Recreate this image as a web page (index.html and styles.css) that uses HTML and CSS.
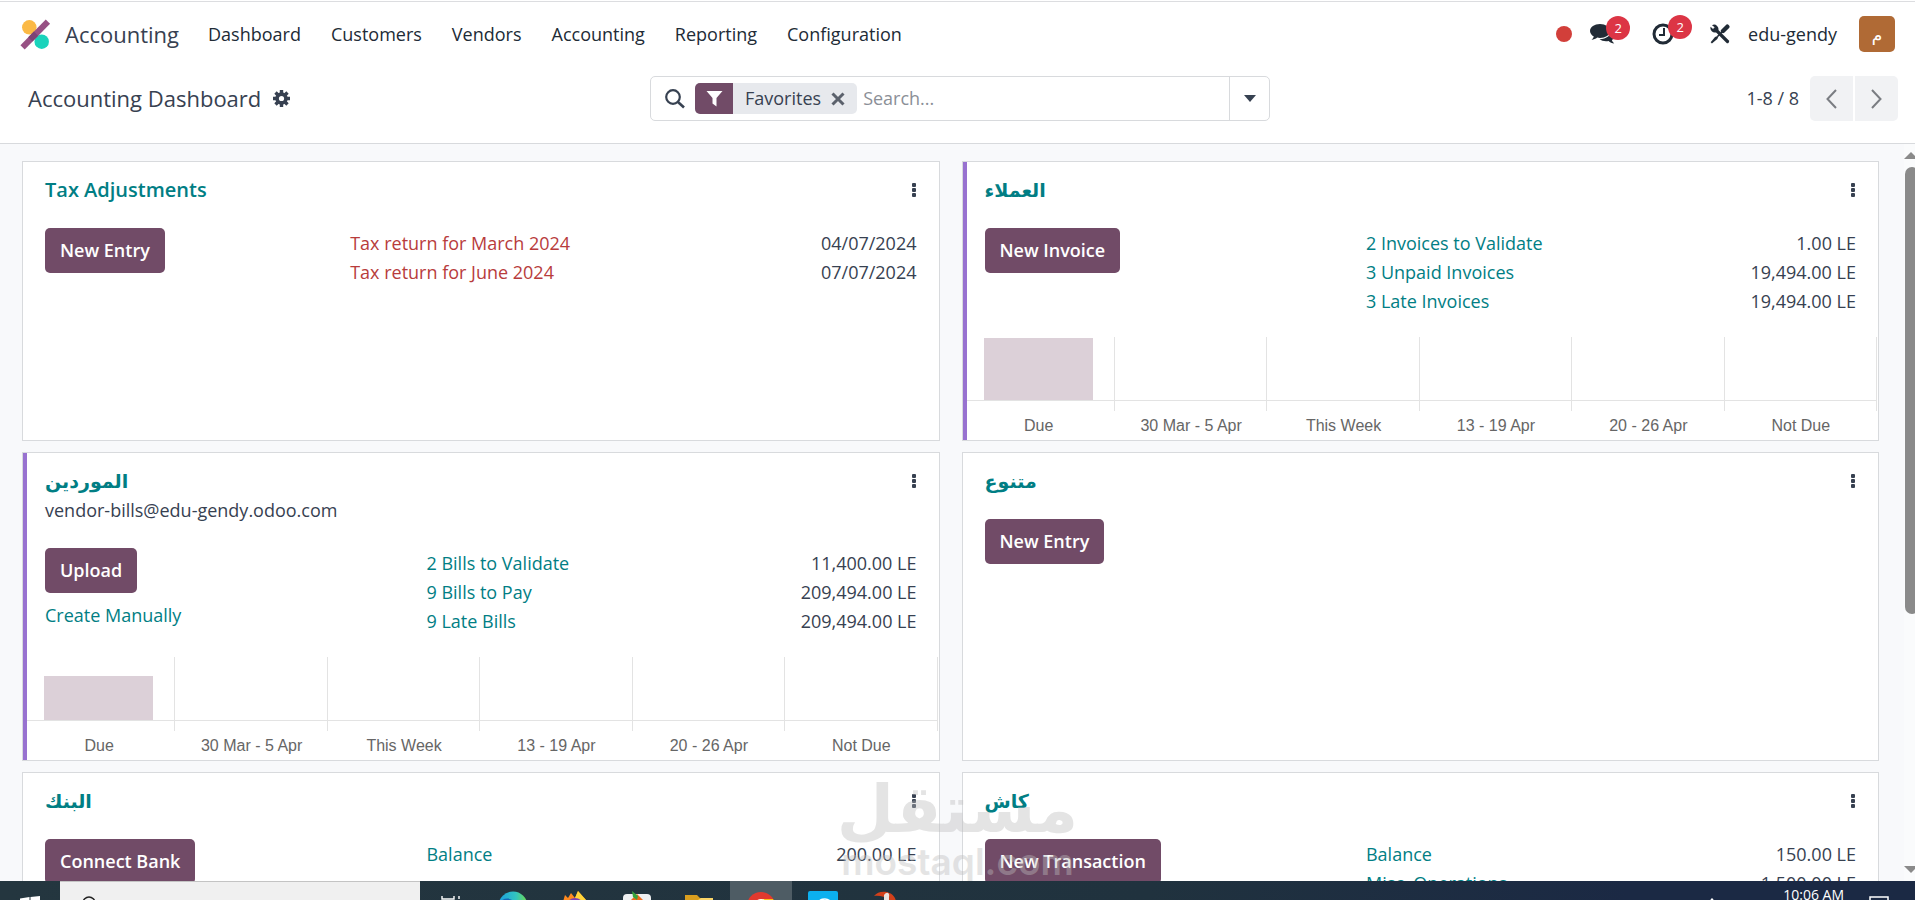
FILE: index.html
```html
<!DOCTYPE html>
<html lang="en">
<head>
<meta charset="utf-8">
<title>Accounting Dashboard</title>
<link rel="stylesheet" href="styles.css">
</head>
<body>
<header class="navbar">
  <a href="#" class="brand">
    <svg class="brand-logo" viewBox="0 0 30 30" aria-hidden="true">
      <circle cx="9" cy="8" r="7" fill="#fbb945"/>
      <circle cx="21" cy="22" r="7" fill="#1ad3bb"/>
      <path d="M2.500 27.500 27 2.500" stroke="#985184" stroke-width="5.800"/>
      <path d="M10 19.800 15.500 14.200" stroke="#7c4475" stroke-width="5.800"/>
    </svg>
    <span>Accounting</span>
  </a>
  <nav class="menu">
    <a href="#">Dashboard</a>
    <a href="#">Customers</a>
    <a href="#">Vendors</a>
    <a href="#">Accounting</a>
    <a href="#">Reporting</a>
    <a href="#">Configuration</a>
  </nav>
  <div class="systray">
    <span class="status-dot"></span>
    <button class="tray-button tray-chat" aria-label="Messages">
      <svg width="26" height="20" viewBox="0 0 26 20" aria-hidden="true"><path fill="#212b36" d="M10 0C4.500 0 0 3.100 0 7c0 2.200 1.500 4.200 3.800 5.500-.3 1.200-1 2.100-2.300 3.300 2.200-.1 4.200-.9 5.700-2.200 .9.200 1.800.3 2.800.3 5.500 0 10-3.100 10-7s-4.500-6.900-10-6.900z"/><path fill="#212b36" d="M21.500 6c0 5-5 9-12 9.300 1.700 1.200 4 1.900 6.500 1.900.9 0 1.800-.1 2.600-.3 1.400 1.300 3.400 2.400 5.600 2.500-1.200-1-2-2.200-2.300-3.400C24 14.900 25.500 13 25.500 11c0-2-1.500-3.900-4-5z"/></svg>
      <span class="badge">2</span>
    </button>
    <button class="tray-button tray-clock" aria-label="Activities">
      <svg width="22" height="22" viewBox="0 0 22 22" aria-hidden="true" fill="none" stroke="#212b36"><circle cx="11" cy="11" r="9" stroke-width="3"/><path d="M12 5v7H7" stroke-width="2"/></svg>
      <span class="badge">2</span>
    </button>
    <button class="tray-button tray-tools" aria-label="Developer tools">
      <svg width="20" height="20" viewBox="0 0 20 20" aria-hidden="true"><path d="M5 5 17.500 17.500" stroke="#212b36" stroke-width="3.200" stroke-linecap="round"/><path d="M2 1.200a4.400 4.400 0 0 1 6 5.800L6.200 8.200a4.400 4.400 0 0 1-5.600-5.400L3.300 5.200 5 3.600z" fill="#212b36"/><path d="M7.500 12.500 13 7" stroke="#212b36" stroke-width="1.600"/><path d="M13 7 17.300 2.700" stroke="#212b36" stroke-width="4.400" stroke-linecap="round"/><path d="M7.500 12 5 13 .7 18.300l1.200 1.200L7.300 15l1-2.300z" fill="#212b36"/></svg>
    </button>
    <a href="#" class="user-name">edu-gendy</a>
    <button class="avatar" aria-label="User menu">م</button>
  </div>
</header>

<section class="control-panel">
  <div class="page-title">
    <h1>Accounting Dashboard</h1>
    <button class="icon-button" aria-label="Settings">
      <svg width="17" height="17" viewBox="0 0 17 17" aria-hidden="true" fill="none" stroke="#374151"><circle cx="8.500" cy="8.500" r="4.400" stroke-width="3.600"/><path d="M8.500 0v3.500M8.500 13.500V17M0 8.500h3.500M13.500 8.500H17M2.500 2.500 5 5M12 12l2.500 2.500M2.500 14.500 5 12M12 5l2.500-2.500" stroke-width="3.400"/></svg>
    </button>
  </div>
  <div class="search">
    <div class="search-field">
      <svg class="search-icon" width="20" height="20" viewBox="0 0 20 20" aria-hidden="true" fill="none" stroke="#374151"><circle cx="8" cy="8" r="6.800" stroke-width="2.200"/><path d="m13 13 6 5.500" stroke-width="2.600"/></svg>
      <div class="facet">
        <span class="facet-icon"><svg width="17" height="17" viewBox="0 0 17 17" aria-hidden="true"><path fill="#fff" d="M.5 1h16L10.500 8v8.500L6.500 13.500V8z"/></svg></span>
        <span>Favorites</span>
        <button class="facet-remove" aria-label="Remove filter"><svg width="14" height="14" viewBox="0 0 14 14" aria-hidden="true"><path d="m1.500 1.500 11 11m0-11-11 11" stroke="#5b616c" stroke-width="3"/></svg></button>
      </div>
      <input class="search-input" type="text" placeholder="Search..." aria-label="Search">
    </div>
    <button class="search-toggle" aria-label="Search options"><svg width="12" height="7" viewBox="0 0 12 7" aria-hidden="true"><path d="M0 0h12L6 7z" fill="#374151"/></svg></button>
  </div>
  <div class="pager">
    <span>1-8 / 8</span>
    <div class="pager-buttons">
      <button class="pager-previous" aria-label="Previous"><svg width="11" height="20" viewBox="0 0 11 20" aria-hidden="true"><path d="M10 1 1.500 10 10 19" fill="none" stroke="#7a7d82" stroke-width="2"/></svg></button>
      <button class="pager-next" aria-label="Next"><svg width="11" height="20" viewBox="0 0 11 20" aria-hidden="true"><path d="m1 1 8.500 9L1 19" fill="none" stroke="#7a7d82" stroke-width="2"/></svg></button>
    </div>
  </div>
</section>

<main class="content">
  <div class="cards">
    <article class="card">
      <div class="card-header">
        <h2><a href="#">Tax Adjustments</a></h2>
        <button class="kebab" aria-label="More"><span></span><span></span><span></span></button>
      </div>
      <div class="card-body">
        <div class="actions actions-narrow"><button class="primary">New Entry</button></div>
        <dl class="figures">
          <div><dt><a href="#" class="late">Tax return for March 2024</a></dt><dd>04/07/2024</dd></div>
          <div><dt><a href="#" class="late">Tax return for June 2024</a></dt><dd>07/07/2024</dd></div>
        </dl>
      </div>
    </article>

    <article class="card card-accent">
      <div class="card-header">
        <h2><a href="#" lang="ar">العملاء</a></h2>
        <button class="kebab" aria-label="More"><span></span><span></span><span></span></button>
      </div>
      <div class="card-body">
        <div class="actions"><button class="primary">New Invoice</button></div>
        <dl class="figures">
          <div><dt><a href="#">2 Invoices to Validate</a></dt><dd>1.00 LE</dd></div>
          <div><dt><a href="#">3 Unpaid Invoices</a></dt><dd>19,494.00 LE</dd></div>
          <div><dt><a href="#">3 Late Invoices</a></dt><dd>19,494.00 LE</dd></div>
        </dl>
      </div>
      <div class="chart">
        <div class="chart-column"><div class="plot"><div class="bar" style="height: 98%"></div></div><span>Due</span></div>
        <div class="chart-column"><div class="plot"></div><span>30 Mar - 5 Apr</span></div>
        <div class="chart-column"><div class="plot"></div><span>This Week</span></div>
        <div class="chart-column"><div class="plot"></div><span>13 - 19 Apr</span></div>
        <div class="chart-column"><div class="plot"></div><span>20 - 26 Apr</span></div>
        <div class="chart-column"><div class="plot"></div><span>Not Due</span></div>
      </div>
    </article>

    <article class="card card-accent">
      <div class="card-header">
        <h2><a href="#" lang="ar">الموردين</a></h2>
        <button class="kebab" aria-label="More"><span></span><span></span><span></span></button>
      </div>
      <p class="alias">vendor-bills@edu-gendy.odoo.com</p>
      <div class="card-body">
        <div class="actions"><button class="primary">Upload</button><a href="#">Create Manually</a></div>
        <dl class="figures">
          <div><dt><a href="#">2 Bills to Validate</a></dt><dd>11,400.00 LE</dd></div>
          <div><dt><a href="#">9 Bills to Pay</a></dt><dd>209,494.00 LE</dd></div>
          <div><dt><a href="#">9 Late Bills</a></dt><dd>209,494.00 LE</dd></div>
        </dl>
      </div>
      <div class="chart">
        <div class="chart-column"><div class="plot"><div class="bar" style="height: 70%"></div></div><span>Due</span></div>
        <div class="chart-column"><div class="plot"></div><span>30 Mar - 5 Apr</span></div>
        <div class="chart-column"><div class="plot"></div><span>This Week</span></div>
        <div class="chart-column"><div class="plot"></div><span>13 - 19 Apr</span></div>
        <div class="chart-column"><div class="plot"></div><span>20 - 26 Apr</span></div>
        <div class="chart-column"><div class="plot"></div><span>Not Due</span></div>
      </div>
    </article>

    <article class="card">
      <div class="card-header">
        <h2><a href="#" lang="ar">متنوع</a></h2>
        <button class="kebab" aria-label="More"><span></span><span></span><span></span></button>
      </div>
      <div class="card-body">
        <div class="actions"><button class="primary">New Entry</button></div>
      </div>
    </article>

    <article class="card">
      <div class="card-header">
        <h2><a href="#" lang="ar">البنك</a></h2>
        <button class="kebab" aria-label="More"><span></span><span></span><span></span></button>
      </div>
      <div class="card-body">
        <div class="actions"><button class="primary">Connect Bank</button></div>
        <dl class="figures">
          <div><dt><a href="#">Balance</a></dt><dd>200.00 LE</dd></div>
        </dl>
      </div>
    </article>

    <article class="card">
      <div class="card-header">
        <h2><a href="#" lang="ar">كاش</a></h2>
        <button class="kebab" aria-label="More"><span></span><span></span><span></span></button>
      </div>
      <div class="card-body">
        <div class="actions"><button class="primary">New Transaction</button></div>
        <dl class="figures">
          <div><dt><a href="#">Balance</a></dt><dd>150.00 LE</dd></div>
          <div><dt><a href="#">Misc. Operations</a></dt><dd>1,500.00 LE</dd></div>
        </dl>
      </div>
    </article>
  </div>
  <div class="scrollbar" aria-hidden="true">
    <svg width="14" height="7" viewBox="0 0 14 7"><path d="M0 7 7 0l7 7z" fill="#8a8a8a"/></svg>
    <div class="track"><div class="thumb"></div></div>
    <svg width="14" height="7" viewBox="0 0 14 7"><path d="M0 0h14L7 7z" fill="#8a8a8a"/></svg>
  </div>
  <div class="watermark" aria-hidden="true">
    <span class="watermark-name" lang="ar">مستقل</span>
    <span class="watermark-site">mostaql.com</span>
  </div>
</main>

<footer class="taskbar">
  <button class="task start" aria-label="Start"><svg width="21" height="20" viewBox="0 0 21 20" aria-hidden="true"><path fill="#fff" d="M0 2.500 9.500 1v8.500H0zM10.500 1 20 0v9.500h-9.500zM0 10.500h9.500V19L0 17.500zM10.500 10.500H20V20l-9.500-1z"/></svg></button>
  <div class="task-search">
    <svg width="16" height="20" viewBox="0 0 16 20" aria-hidden="true" fill="none" stroke="#222" stroke-width="1.500"><circle cx="8" cy="7" r="6"/><path d="m4 12-4 5"/></svg>
    <span>Type here to search</span>
  </div>
  <button class="task task-view" aria-label="Task view"><svg width="20" height="20" viewBox="0 0 20 20" aria-hidden="true" fill="none" stroke="#fff" stroke-width="1.400"><path d="M1 0v3h12V0M1 17V6h12v11zM18 0v3M18 6v11"/></svg></button>
  <button class="task" aria-label="Edge"><svg width="30" height="30" viewBox="0 0 30 30" aria-hidden="true"><defs><linearGradient id="edge"><stop offset="0" stop-color="#1b9fe0"/><stop offset=".6" stop-color="#32c4c0"/><stop offset="1" stop-color="#6fdc4d"/></linearGradient></defs><circle cx="15" cy="15" r="14.500" fill="url(#edge)"/><path d="M1 12c4-6 14-6 16 1-6-2-8 2-8 6-4 0-8-3-8-7z" fill="#1566b8"/></svg></button>
  <button class="task" aria-label="Firefox"><svg width="28" height="28" viewBox="0 0 28 28" aria-hidden="true"><path d="M1 14 4 4l3 3 3-5 4 5 3-7 8 9 3 5v13H1z" fill="#ff8a1f"/><path d="m17 0 8 9-6 4-5-6z" fill="#ffd53a"/><circle cx="14" cy="16" r="9" fill="#7d3fb0"/></svg></button>
  <button class="task" aria-label="Paint"><svg width="28" height="28" viewBox="0 0 28 28" aria-hidden="true"><rect y="3" width="28" height="25" rx="4" fill="#eef0f1"/><path d="m8 9 6-6 6 6v5H8z" fill="#ee6a1c"/><path d="m9 0 6 5-1 4-4-3z" fill="#37a33c"/></svg></button>
  <button class="task" aria-label="File Explorer"><svg width="28" height="28" viewBox="0 0 28 28" aria-hidden="true"><path d="M0 4h12l3 3h12v21H0z" fill="#d99e1e"/><path d="M0 9h13l3-2h12v21H0z" fill="#fbd568"/></svg></button>
  <button class="task task-active" aria-label="Chrome"><svg width="30" height="30" viewBox="0 0 30 30" aria-hidden="true"><circle cx="15" cy="15" r="14" fill="#e1392e"/><path d="M15 8h12a14 14 0 0 1-12 21z" fill="#fbc116"/><circle cx="15" cy="15" r="7" fill="#fff"/></svg></button>
  <button class="task" aria-label="Cloud app"><svg width="30" height="30" viewBox="0 0 30 30" aria-hidden="true"><rect width="30" height="30" rx="2" fill="#0cb0ef"/><path d="M9 14a8 8 0 0 1 13-4M12 16a5 5 0 0 1 8-4" fill="none" stroke="#fff" stroke-width="1.600"/></svg></button>
  <button class="task" aria-label="Office"><svg width="28" height="28" viewBox="0 0 28 28" aria-hidden="true"><path d="M3 5C8-2 24-1 25 11l-5 5C20 8 12 4 3 5z" fill="#d2401a"/><path d="M13 4c3-4 6-2 5 2v20h-5z" fill="#e8e3df"/></svg></button>
  <div class="task-tray">
    <svg class="tray-chevron" width="12" height="8" viewBox="0 0 12 8" aria-hidden="true"><path d="m1 7 5-6 5 6" fill="none" stroke="#fff" stroke-width="1.400"/></svg>
    <time>10:06 AM</time>
    <svg class="tray-notes" width="20" height="18" viewBox="0 0 20 18" aria-hidden="true"><path d="M1 1h18v12h-7l-3 4v-4H1z" fill="none" stroke="#fff" stroke-width="1.500"/></svg>
  </div>
</footer>
</body>
</html>
```

FILE: styles.css
```css
* {
  box-sizing: border-box;
}

body {
  display: flex;
  flex-direction: column;
  height: 100vh;
  margin: 0;
  overflow: hidden;
  background: #fff;
  color: #374151;
  font: 18px/29px "Open Sans", "DejaVu Sans", sans-serif;
}

h1, h2, p, dl, dd {
  margin: 0;
}

a {
  color: #017e84;
  text-decoration: none;
}

button {
  padding: 0;
  border: 0;
  background: none;
  color: inherit;
  font: inherit;
}

svg {
  display: block;
  flex: none;
}

/* Top navigation */
.navbar {
  display: flex;
  align-items: center;
  height: 65px;
  margin-top: 1px;
  padding: 0 20px;
  border-top: 1px solid #dcdde0;
}

.brand {
  display: flex;
  align-items: center;
  gap: 14px;
  color: #374151;
  font-size: 22px;
}

.brand-logo {
  width: 31px;
  height: 31px;
}

.menu {
  display: flex;
  gap: 30px;
  margin-left: 29px;
}

.menu a,
.user-name {
  color: #212b36;
}

.systray {
  display: flex;
  align-items: center;
  margin-left: auto;
}

.status-dot {
  width: 16px;
  height: 16px;
  border-radius: 50%;
  background: #d23f3a;
}

.tray-button {
  position: relative;
}

.tray-chat {
  margin-left: 18px;
}

.tray-clock {
  margin-left: 36px;
}

.tray-tools {
  margin-left: 36px;
}

.badge {
  position: absolute;
  top: -8px;
  left: 16px;
  width: 24px;
  height: 24px;
  border-radius: 50%;
  background: #dc3545;
  color: #fff;
  font-size: 13px;
  line-height: 24px;
  text-align: center;
}

.user-name {
  margin-left: 18px;
}

.avatar {
  width: 36px;
  height: 36px;
  margin-left: 22px;
  border-radius: 5px;
  background: #b06a35;
  color: #fff;
  font-size: 17px;
}

/* Title, search and pager */
.control-panel {
  display: grid;
  grid-template-columns: 1fr 620px 1fr;
  align-items: center;
  padding: 10px 17px 22px 22px;
  border-bottom: 1px solid #d8dadd;
}

.page-title {
  display: flex;
  align-items: center;
  gap: 12px;
  padding-left: 6px;
}

.page-title h1 {
  font-size: 22px;
  font-weight: 400;
}

.search {
  display: flex;
  height: 45px;
  border: 1px solid #d8dadd;
  border-radius: 5px;
}

.search-field {
  display: flex;
  flex: 1;
  align-items: center;
  padding-left: 14px;
}

.facet {
  display: flex;
  align-items: center;
  height: 31px;
  margin-left: 10px;
  padding-right: 12px;
  border-radius: 5px;
  background: #e7e9ed;
  overflow: hidden;
}

.facet-icon {
  display: grid;
  place-items: center;
  width: 38px;
  height: 31px;
  margin-right: 12px;
  background: #714b67;
}

.facet-remove {
  margin-left: 10px;
}

.search-input {
  flex: 1;
  min-width: 0;
  padding: 0 6px;
  border: 0;
  outline: 0;
  background: none;
  color: inherit;
  font: inherit;
}

.search-input::placeholder {
  color: #8b8f97;
  opacity: 1;
}

.search-toggle {
  display: grid;
  place-items: center;
  width: 40px;
  border-left: 1px solid #d8dadd;
}

.pager {
  display: flex;
  align-items: center;
  justify-content: flex-end;
  gap: 11px;
}

.pager-buttons {
  display: flex;
  gap: 2px;
}

.pager-buttons button {
  display: grid;
  place-items: center;
  width: 43px;
  height: 45px;
  background: #f1f2f4;
}

.pager-previous {
  border-radius: 5px 0 0 5px;
}

.pager-next {
  border-radius: 0 5px 5px 0;
}

/* Journal cards */
.content {
  position: relative;
  display: flex;
  flex: 1;
  min-height: 0;
  overflow: hidden;
  background: #f8f9fb;
}

.cards {
  display: grid;
  flex: 1;
  grid-template-columns: 1fr 1fr;
  gap: 11px 22px;
  align-content: start;
  padding: 17px 25px 0 22px;
}

.card {
  position: relative;
  border: 1px solid #d8dadd;
  background: #fff;
}

.card-accent::before {
  content: "";
  position: absolute;
  top: 0;
  bottom: 0;
  left: 0;
  width: 4px;
  background: #9872d0;
}

.card-header {
  display: flex;
  align-items: center;
  justify-content: space-between;
  padding: 13px 22px 0;
}

.card-header h2 {
  font-size: 20px;
  font-weight: 600;
  line-height: 30px;
}

.card-header [lang="ar"] {
  font-size: 19px;
}

.kebab {
  display: grid;
  gap: 1px;
  padding: 0 1px;
}

.kebab span {
  width: 4px;
  height: 4px;
  border-radius: 1px;
  background: #374151;
}

.alias {
  padding: 0 22px;
}

.card-body {
  display: flex;
  margin-top: 23px;
}

.actions {
  display: flex;
  flex: 0 0 41.667%;
  flex-direction: column;
  gap: 8px;
  align-items: flex-start;
  padding-left: 22px;
}

.actions-narrow {
  flex-basis: 33.333%;
}

.primary {
  height: 45px;
  padding: 0 15px;
  border-radius: 5px;
  background: #714b67;
  color: #fff;
  font-weight: 600;
}

.figures {
  flex: 1;
  padding: 1px 22px 0;
}

.figures div {
  display: flex;
  justify-content: space-between;
}

.late {
  color: #b83c3c;
}

.chart {
  display: grid;
  grid-template-columns: repeat(6, 1fr);
  margin-top: 21px;
  padding-right: 1px;
}

.chart-column {
  color: #666;
  font: 16px/20px "Liberation Sans", Arial, sans-serif;
  text-align: center;
}

.plot {
  display: flex;
  align-items: flex-end;
  justify-content: center;
  height: 64px;
  border-right: 1px solid #e3e3e3;
  border-bottom: 1px solid #e3e3e3;
}

.bar {
  width: 72%;
  background: #dcd0d8;
}

.chart-column span {
  display: block;
  height: 39px;
  padding-top: 15px;
  background: linear-gradient(#e3e3e3, #e3e3e3) right top / 1px 10px no-repeat;
}

/* Scroll position */
.scrollbar {
  display: flex;
  flex-direction: column;
  width: 11px;
  padding: 8px 0;
  overflow: hidden;
  background: #fafbfc;
}

.track {
  flex: 1;
  padding: 8px 0 0 1px;
}

.thumb {
  width: 14px;
  height: 64%;
  border-radius: 7px;
  background: #8a8a8a;
}

/* Site mark over the cards */
.watermark {
  position: absolute;
  bottom: -1px;
  left: 50%;
  display: flex;
  flex-direction: column;
  align-items: center;
  color: #bdbdbd;
  opacity: 0.4;
  transform: translateX(-50%);
  pointer-events: none;
}

.watermark-name {
  font: 700 66px/64px "DejaVu Sans", sans-serif;
}

.watermark-site {
  font: 600 37px/40px Inter, sans-serif;
}

/* System taskbar */
.taskbar {
  display: flex;
  height: 19px;
  overflow: hidden;
  background: linear-gradient(90deg, #24363f, #20323e 60%, #1b2944 85%);
  color: #fff;
}

.task {
  display: flex;
  flex: none;
  justify-content: center;
  align-items: flex-start;
  width: 62px;
  padding-top: 10px;
}

.start,
.task-view {
  padding-top: 15px;
}

.start {
  width: 60px;
}

.task-active {
  background: #4e5c64;
}

.task-search {
  display: flex;
  flex: none;
  gap: 10px;
  align-items: flex-start;
  width: 360px;
  padding: 14px 0 0 21px;
  border-top: 1px solid #c4c4c4;
  background: #f0f0f0;
  color: #333;
  font-size: 17px;
  line-height: 24px;
}

.task-tray {
  display: flex;
  align-items: flex-start;
  margin-left: auto;
  padding-right: 26px;
}

.tray-chevron {
  margin: 17px 65px 0 0;
}

.task-tray time {
  font-size: 14px;
  line-height: 28px;
}

.tray-notes {
  margin: 15px 0 0 25px;
}
```
